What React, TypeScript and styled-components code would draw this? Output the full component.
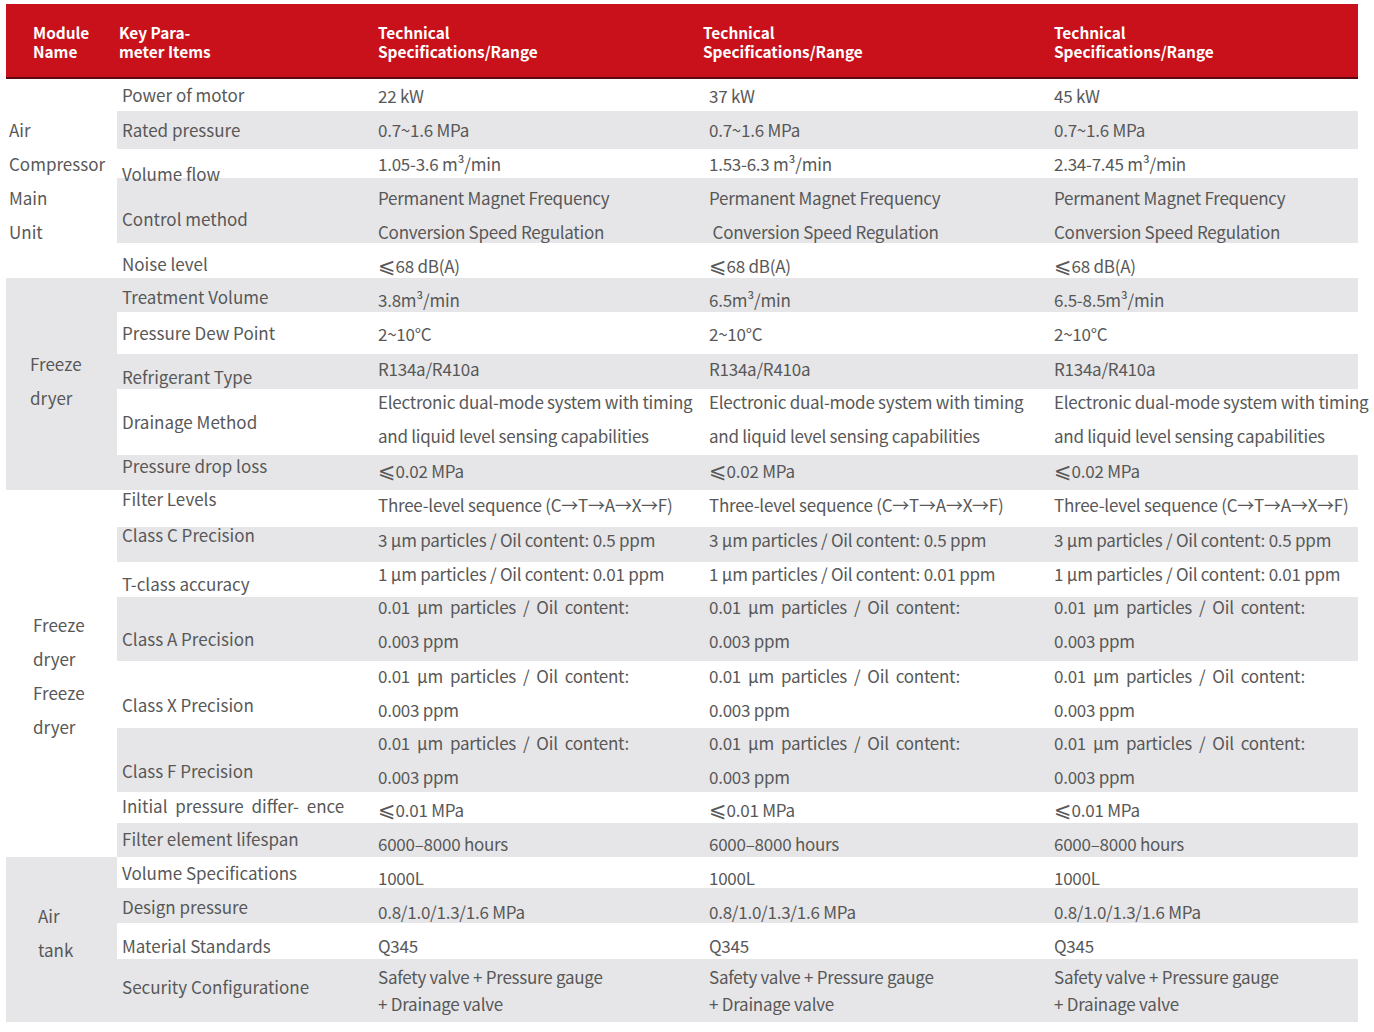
import React from "react";
import styled, { createGlobalStyle } from "styled-components";

const GlobalStyle = createGlobalStyle`
  body {
    margin: 0;
    background: #fff;
    font-family: "Noto Sans CJK SC", "Noto Sans", sans-serif;
  }
`;

const Page = styled.div`
  padding: 4px 0 0 6px;
  width: 1352px;
`;

const HeaderRow = styled.div`
  display: grid;
  grid-template-columns: 113px 259px 325px 351px 304px;
  align-items: center;
  height: 75px;
  padding-top: 2px;
  box-sizing: border-box;
  background: #c8111b;
  border-bottom: 2px solid #5b0b0e;
  color: #fff;
  font-size: 15.4px;
  font-weight: 700;
  line-height: 19px;
`;

const HeadCell = styled.div<{ $pl?: number }>`
  padding-left: ${(p) => p.$pl ?? 0}px;
`;

const Group = styled.div<{ $gray: boolean }>`
  display: grid;
  grid-template-columns: 111px 1fr;
  background: ${(p) => (p.$gray ? "#e6e6e8" : "#fff")};
`;

const ModuleCell = styled.div<{ $pl: number; $shift: number }>`
  display: flex;
  flex-direction: column;
  justify-content: center;
  padding-left: ${(p) => p.$pl}px;
  padding-top: ${(p) => Math.max(0, p.$shift * 2)}px;
  padding-bottom: ${(p) => Math.max(0, -p.$shift * 2)}px;
  color: #585858;
  font-size: 17px;
  line-height: 34px;
`;

const Row = styled.div<{ $h: number; $gray: boolean }>`
  display: grid;
  grid-template-columns: 261px 331px 345px 304px;
  grid-template-rows: ${(p) => p.$h}px;
  height: ${(p) => p.$h}px;
  background: ${(p) => (p.$gray ? "#e6e6e8" : "#fff")};
`;

const Label = styled.div<{ $shift: number; $ws?: number }>`
  display: flex;
  align-items: center;
  min-height: 0;
  box-sizing: border-box;
  padding-left: 5px;
  padding-top: ${(p) => Math.max(0, p.$shift * 2)}px;
  padding-bottom: ${(p) => Math.max(0, -p.$shift * 2)}px;
  color: #585858;
  font-size: 17px;
  line-height: 34px;
  white-space: nowrap;
  word-spacing: ${(p) => p.$ws ?? 0}px;
`;

const Value = styled.div<{ $shift: number; $lh: number }>`
  display: flex;
  flex-direction: column;
  justify-content: center;
  min-height: 0;
  box-sizing: border-box;
  padding-top: ${(p) => Math.max(0, p.$shift * 2)}px;
  padding-bottom: ${(p) => Math.max(0, -p.$shift * 2)}px;
  color: #585858;
  font-size: 17px;
  letter-spacing: -0.25px;
  line-height: ${(p) => p.$lh}px;
  white-space: nowrap;
`;

const Line = styled.span<{ $justify?: boolean }>`
  display: block;
  width: ${(p) => (p.$justify ? "251px" : "auto")};
  text-align: ${(p) => (p.$justify ? "justify" : "left")};
  text-align-last: ${(p) => (p.$justify ? "justify" : "auto")};
`;

const Sym = styled.span`
  font-family: "DejaVu Sans", sans-serif;
  font-size: 21px;
  line-height: 0;
  letter-spacing: 0;
`;

type Spec = {
  label: string;
  h: number;
  ls: number;
  vs: number;
  v: string[][];
  lh?: number;
  ws?: number;
  justify?: boolean;
};

const same = (lines: string[]) => [lines, lines, lines];

const groups: {
  name: string[];
  gray: boolean;
  pl: number;
  shift: number;
  rows: Spec[];
}[] = [
  {
    name: ["Air", "Compressor", "Main", "Unit"],
    gray: false,
    pl: 3,
    shift: 2.5,
    rows: [
      { label: "Power of motor", h: 32, ls: 0, vs: 1, v: [["22 kW"], ["37 kW"], ["45 kW"]] },
      { label: "Rated pressure", h: 38, ls: 0, vs: 0, v: same(["0.7~1.6 MPa"]) },
      {
        label: "Volume flow",
        h: 29,
        ls: 10,
        vs: 0,
        v: [["1.05-3.6 m³/min"], ["1.53-6.3 m³/min"], ["2.34-7.45 m³/min"]],
      },
      {
        label: "Control method",
        h: 65,
        ls: 8,
        vs: 4,
        v: [
          ["Permanent Magnet Frequency", "Conversion Speed Regulation"],
          ["Permanent Magnet Frequency", "\u00a0Conversion Speed Regulation"],
          ["Permanent Magnet Frequency", "Conversion Speed Regulation"],
        ],
      },
      { label: "Noise level", h: 35, ls: 3, vs: 5, v: same(["⩽68 dB(A)"]) },
    ],
  },
  {
    name: ["Freeze", "dryer"],
    gray: true,
    pl: 24,
    shift: -3,
    rows: [
      {
        label: "Treatment Volume",
        h: 34,
        ls: 2,
        vs: 5,
        v: [["3.8m³/min"], ["6.5m³/min"], ["6.5-8.5m³/min"]],
      },
      { label: "Pressure Dew Point", h: 42, ls: 0, vs: 1, v: same(["2~10°C"]) },
      { label: "Refrigerant Type", h: 35, ls: 5, vs: -3, v: same(["R134a/R410a"]) },
      {
        label: "Drainage Method",
        h: 66,
        ls: 0,
        vs: -3,
        v: same(["Electronic dual-mode system with timing", "and liquid level sensing capabilities"]),
      },
      { label: "Pressure drop loss", h: 35, ls: -7, vs: -2, v: same(["⩽0.02 MPa"]) },
    ],
  },
  {
    name: ["Freeze", "dryer", "Freeze", "dryer"],
    gray: false,
    pl: 27,
    shift: 2.5,
    rows: [
      { label: "Filter Levels", h: 37, ls: -10, vs: -4, v: same(["Three-level sequence (C→T→A→X→F)"]) },
      {
        label: "Class C Precision",
        h: 35,
        ls: -10,
        vs: -5,
        v: same(["3 μm particles / Oil content: 0.5 ppm"]),
      },
      {
        label: "T-class accuracy",
        h: 35,
        ls: 4,
        vs: -6,
        v: same(["1 μm particles / Oil content: 0.01 ppm"]),
      },
      {
        label: "Class A Precision",
        h: 64,
        ls: 10,
        vs: -5,
        justify: true,
        v: same(["0.01 μm particles / Oil content:", "0.003 ppm"]),
      },
      {
        label: "Class X Precision",
        h: 67,
        ls: 10,
        vs: -2,
        justify: true,
        v: same(["0.01 μm particles / Oil content:", "0.003 ppm"]),
      },
      {
        label: "Class F Precision",
        h: 64,
        ls: 11,
        vs: 0,
        justify: true,
        v: same(["0.01 μm particles / Oil content:", "0.003 ppm"]),
      },
      {
        label: "Initial pressure differ- ence",
        h: 31,
        ls: -2,
        vs: 2,
        ws: 4,
        v: same(["⩽0.01 MPa"]),
      },
      { label: "Filter element lifespan", h: 34, ls: -1, vs: 4, v: same(["6000–8000 hours"]) },
    ],
  },
  {
    name: ["Air", "tank"],
    gray: true,
    pl: 32,
    shift: -6.5,
    rows: [
      { label: "Volume Specifications", h: 31, ls: 0, vs: 5, v: same(["1000L"]) },
      { label: "Design pressure", h: 35, ls: 1, vs: 6, v: same(["0.8/1.0/1.3/1.6 MPa"]) },
      { label: "Material Standards", h: 36, ls: 5, vs: 5, v: same(["Q345"]) },
      {
        label: "Security Configuratione",
        h: 63,
        ls: -4,
        vs: -1,
        lh: 27,
        v: same(["Safety valve + Pressure gauge", "+ Drainage valve"]),
      },
    ],
  },
];

const LineText: React.FC<{ text: string }> = ({ text }) =>
  text.startsWith("⩽") ? (
    <>
      <Sym>⩽</Sym>
      {text.slice(1)}
    </>
  ) : (
    <>{text}</>
  );

const SpecRow: React.FC<{ spec: Spec; gray: boolean }> = ({ spec, gray }) => (
  <Row $h={spec.h} $gray={gray}>
    <Label $shift={spec.ls} $ws={spec.ws}>
      {spec.label}
    </Label>
    {spec.v.map((lines, i) => (
      <Value key={i} $shift={spec.vs} $lh={spec.lh ?? 34}>
        {lines.map((line, j) => (
          <Line key={j} $justify={spec.justify && j === 0}>
            <LineText text={line} />
          </Line>
        ))}
      </Value>
    ))}
  </Row>
);

export default function App() {
  let index = 0;
  return (
    <>
      <GlobalStyle />
      <Page>
        <HeaderRow>
          <HeadCell $pl={27}>
            Module
            <br />
            Name
          </HeadCell>
          <HeadCell>
            Key Para-
            <br />
            meter Items
          </HeadCell>
          <HeadCell>
            Technical
            <br />
            Specifications/Range
          </HeadCell>
          <HeadCell>
            Technical
            <br />
            Specifications/Range
          </HeadCell>
          <HeadCell>
            Technical
            <br />
            Specifications/Range
          </HeadCell>
        </HeaderRow>
        {groups.map((g) => (
          <Group key={g.name.join("-") + g.pl} $gray={g.gray}>
            <ModuleCell $pl={g.pl} $shift={g.shift}>
              {g.name.map((n, i) => (
                <div key={i}>{n}</div>
              ))}
            </ModuleCell>
            <div>
              {g.rows.map((r) => {
                const gray = index % 2 === 1;
                index += 1;
                return <SpecRow key={r.label} spec={r} gray={gray} />;
              })}
            </div>
          </Group>
        ))}
      </Page>
    </>
  );
}
